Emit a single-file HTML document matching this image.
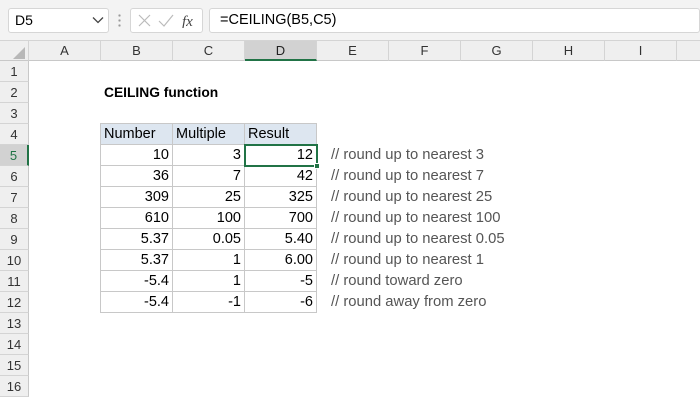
<!DOCTYPE html><html><head><style>
*{margin:0;padding:0;box-sizing:border-box}
body{width:700px;height:400px;overflow:hidden;background:#fff;font-family:"Liberation Sans",Calibri,sans-serif;font-size:14px;color:#000;position:relative}
.a{position:absolute}
.ch{position:absolute;top:41px;height:20px;background:#efefef;border-right:1px solid #d4d4d4;border-bottom:1px solid #c8c8c8;text-align:center;line-height:20px;font-size:13px;color:#333}
.rh{position:absolute;left:0;width:29px;height:21px;background:#efefef;border-bottom:1px solid #d4d4d4;border-right:1px solid #c8c8c8;text-align:center;line-height:21px;font-size:13px;color:#333}
.c{position:absolute;height:21px;width:72px;border-right:1px solid #c8c8c8;border-bottom:1px solid #c8c8c8;line-height:21px;padding:0 3px;text-align:right;font-size:14.5px}
.cm{position:absolute;left:331px;line-height:21px;color:#555;font-size:14.8px}
</style></head><body>
<div class="a" style="left:0;top:0;width:700px;height:41px;background:#f3f3f3;border-bottom:1px solid #d4d4d4"></div>
<div class="a" style="left:8px;top:8px;width:101px;height:25px;background:#fff;border:1px solid #d6d6d6;border-radius:3px;line-height:23px;padding-left:6px;font-size:14px">D5</div>
<svg class="a" style="left:92px;top:16px" width="12" height="8"><path d="M1 1.5L6 6.5L11 1.5" stroke="#444" fill="none" stroke-width="1.3"/></svg>
<div class="a" style="left:118px;top:13px;width:3px;height:16px;background:radial-gradient(circle,#999 1px,transparent 1.3px) 0 0/3px 5px"></div>
<div class="a" style="left:130px;top:8px;width:73px;height:25px;background:#fff;border:1px solid #d6d6d6;border-radius:3px"></div>
<svg class="a" style="left:137px;top:14px" width="60" height="14"><path d="M2 1L13 12M13 1L2 12" stroke="#bbb" stroke-width="1.2"/><path d="M22 7L27 12L36 1" stroke="#bbb" fill="none" stroke-width="1.2"/><text x="45" y="12" font-family="Liberation Serif" font-style="italic" font-size="15" fill="#444">fx</text></svg>
<div class="a" style="left:209px;top:8px;width:491px;height:25px;background:#fff;border:1px solid #d6d6d6;border-radius:3px;line-height:23px;padding-left:10px;font-size:14.5px">=CEILING(B5,C5)</div>
<div class="ch" style="left:0;width:29px"></div>
<svg class="a" style="left:12px;top:46px" width="14" height="14"><path d="M13 1L13 13L1 13Z" fill="#b8b8b8"/></svg>
<div class="ch" style="left:29px;width:72px">A</div><div class="ch" style="left:101px;width:72px">B</div><div class="ch" style="left:173px;width:72px">C</div>
<div class="ch" style="left:245px;width:72px;background:#d2d2d2;border-bottom:2px solid #217346;color:#222">D</div>
<div class="ch" style="left:317px;width:72px">E</div><div class="ch" style="left:389px;width:72px">F</div><div class="ch" style="left:461px;width:72px">G</div><div class="ch" style="left:533px;width:72px">H</div><div class="ch" style="left:605px;width:72px">I</div><div class="ch" style="left:677px;width:30px"></div>
<div class="rh" style="top:61px">1</div><div class="rh" style="top:82px">2</div><div class="rh" style="top:103px">3</div><div class="rh" style="top:124px">4</div>
<div class="rh" style="top:145px;background:#d2d2d2;border-right:2px solid #217346;color:#217346">5</div>
<div class="rh" style="top:166px">6</div><div class="rh" style="top:187px">7</div><div class="rh" style="top:208px">8</div><div class="rh" style="top:229px">9</div><div class="rh" style="top:250px">10</div><div class="rh" style="top:271px">11</div><div class="rh" style="top:292px">12</div><div class="rh" style="top:313px">13</div><div class="rh" style="top:334px">14</div><div class="rh" style="top:355px">15</div><div class="rh" style="top:376px">16</div>
<div class="a" style="left:104px;top:82px;line-height:21px;font-weight:bold;font-size:13.8px">CEILING function</div>
<div class="a" style="left:100px;top:123px;width:1px;height:190px;background:#c8c8c8"></div>
<div class="a" style="left:100px;top:123px;width:217px;height:1px;background:#c8c8c8"></div>
<div class="c" style="left:101px;top:124px;background:#dde6f0;text-align:left">Number</div>
<div class="c" style="left:173px;top:124px;background:#dde6f0;text-align:left">Multiple</div>
<div class="c" style="left:245px;top:124px;background:#dde6f0;text-align:left">Result</div>
<div class="c" style="left:101px;top:145px">10</div><div class="c" style="left:173px;top:145px">3</div><div class="c" style="left:245px;top:145px">12</div>
<div class="c" style="left:101px;top:166px">36</div><div class="c" style="left:173px;top:166px">7</div><div class="c" style="left:245px;top:166px">42</div>
<div class="c" style="left:101px;top:187px">309</div><div class="c" style="left:173px;top:187px">25</div><div class="c" style="left:245px;top:187px">325</div>
<div class="c" style="left:101px;top:208px">610</div><div class="c" style="left:173px;top:208px">100</div><div class="c" style="left:245px;top:208px">700</div>
<div class="c" style="left:101px;top:229px">5.37</div><div class="c" style="left:173px;top:229px">0.05</div><div class="c" style="left:245px;top:229px">5.40</div>
<div class="c" style="left:101px;top:250px">5.37</div><div class="c" style="left:173px;top:250px">1</div><div class="c" style="left:245px;top:250px">6.00</div>
<div class="c" style="left:101px;top:271px">-5.4</div><div class="c" style="left:173px;top:271px">1</div><div class="c" style="left:245px;top:271px">-5</div>
<div class="c" style="left:101px;top:292px">-5.4</div><div class="c" style="left:173px;top:292px">-1</div><div class="c" style="left:245px;top:292px">-6</div>
<div class="a" style="left:244px;top:144px;width:74px;height:23px;border:2px solid #217346"></div>
<div class="a" style="left:314px;top:163px;width:6px;height:6px;background:#217346;border:1px solid #fff"></div>
<div class="cm" style="top:145px">// round up to nearest 3</div>
<div class="cm" style="top:166px">// round up to nearest 7</div>
<div class="cm" style="top:187px">// round up to nearest 25</div>
<div class="cm" style="top:208px">// round up to nearest 100</div>
<div class="cm" style="top:229px">// round up to nearest 0.05</div>
<div class="cm" style="top:250px">// round up to nearest 1</div>
<div class="cm" style="top:271px">// round toward zero</div>
<div class="cm" style="top:292px">// round away from zero</div>
</body></html>
